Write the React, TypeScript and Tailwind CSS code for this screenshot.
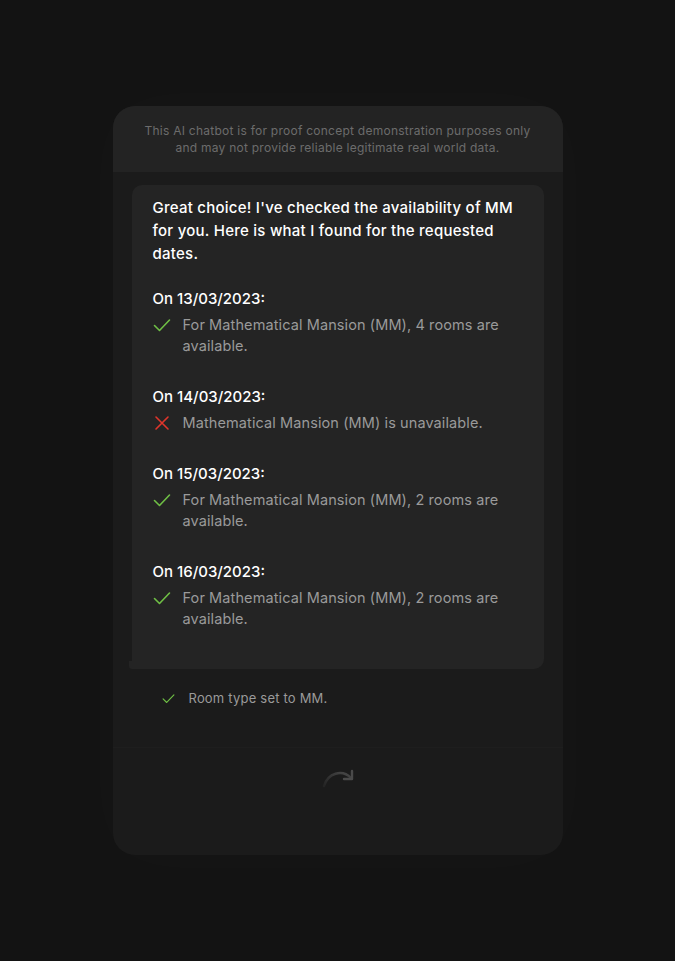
import React from "react";

const Check = ({ size = 18 }: { size?: number }) => (
  <svg width={size} height={size} viewBox="0 0 18 18" fill="none">
    <polyline points="1.5,9.5 6.5,14.5 16.5,4" stroke="#6fbf45" strokeWidth="1.6" strokeLinecap="round" strokeLinejoin="round" />
  </svg>
);

const Cross = () => (
  <svg width="18" height="18" viewBox="0 0 18 18" fill="none">
    <path d="M3 3 L15 15 M15 3 L3 15" stroke="#e0352b" strokeWidth="1.6" strokeLinecap="round" />
  </svg>
);

type Item = { date: string; ok: boolean; lines: string[] };

const items: Item[] = [
  { date: "On 13/03/2023:", ok: true, lines: ["For Mathematical Mansion (MM), 4 rooms are", "available."] },
  { date: "On 14/03/2023:", ok: false, lines: ["Mathematical Mansion (MM) is unavailable."] },
  { date: "On 15/03/2023:", ok: true, lines: ["For Mathematical Mansion (MM), 2 rooms are", "available."] },
  { date: "On 16/03/2023:", ok: true, lines: ["For Mathematical Mansion (MM), 2 rooms are", "available."] },
];

export default function App() {
  return (
    <div
      className="min-h-[961px] w-full bg-[#131313] pt-[106px]"
      style={{ fontFamily: 'Inter, "Open Sans", sans-serif' }}
    >
      <div className="mx-auto flex h-[749px] w-[450px] flex-col overflow-hidden rounded-[22px] bg-[#1b1b1b] shadow-[0_0_80px_30px_rgba(255,255,255,0.01)]">
        <div className="flex h-[66px] items-center justify-center whitespace-nowrap bg-[#232323] text-center text-[12px] leading-[17px] tracking-[0.25px] text-[#6c6c6c]">
          This AI chatbot is for proof concept demonstration purposes only
          <br />
          and may not provide reliable legitimate real world data.
        </div>
        <div className="px-[19px] pt-[13px]">
          <div className="relative rounded-[10px] rounded-bl-none bg-[#242424] pl-[21px] pr-[10px] pt-[11px] pb-[40px]">
            <div className="absolute -left-[3px] bottom-0 h-[8px] w-[6px] rounded-bl-[3px] bg-[#242424]" />
            <p className="whitespace-nowrap text-[15px] font-medium leading-[23px] tracking-[0.25px] text-white">
              Great choice! I've checked the availability of MM
              <br />
              for you. Here is what I found for the requested
              <br />
              dates.
            </p>
            <div className="mt-[23px] flex flex-col gap-[30px]">
              {items.map((it) => (
                <div key={it.date}>
                  <div className="text-[15px] font-medium leading-[22px] text-white">{it.date}</div>
                  <div className="mt-[4px] flex items-start">
                    <div className="mt-[2px] w-[30px] shrink-0">{it.ok ? <Check /> : <Cross />}</div>
                    <div className="whitespace-nowrap text-[14.5px] leading-[21px] tracking-[0.1px] text-[#9a9a9a]">
                      {it.lines.map((l, i) => (
                        <div key={i}>{l}</div>
                      ))}
                    </div>
                  </div>
                </div>
              ))}
            </div>
          </div>
          <div className="mt-[20px] flex items-center pl-[30px]">
            <div className="w-[27px]">
              <Check size={13} />
            </div>
            <span className="text-[13px] leading-[18px] tracking-[0.2px] text-[#9a9a9a]">Room type set to MM.</span>
          </div>
        </div>
        <div className="mt-[40px] flex flex-1 justify-center border-t border-[#1e1e1e] pt-[18px]">
          <svg width="34" height="22" viewBox="0 0 34 22" fill="none">
            <defs>
              <linearGradient id="g" x1="0" y1="1" x2="1" y2="0">
                <stop offset="0" stopColor="#3a3a3a" stopOpacity="0.3" />
                <stop offset="1" stopColor="#4a4a4a" />
              </linearGradient>
            </defs>
            <path d="M3 20 C 7 7, 21 3, 30 12" stroke="url(#g)" strokeWidth="2.4" strokeLinecap="round" fill="none" />
            <path d="M31 5 L31 13 L23 13" stroke="#4a4a4a" strokeWidth="2.4" strokeLinecap="round" strokeLinejoin="round" fill="none" />
          </svg>
        </div>
      </div>
    </div>
  );
}
